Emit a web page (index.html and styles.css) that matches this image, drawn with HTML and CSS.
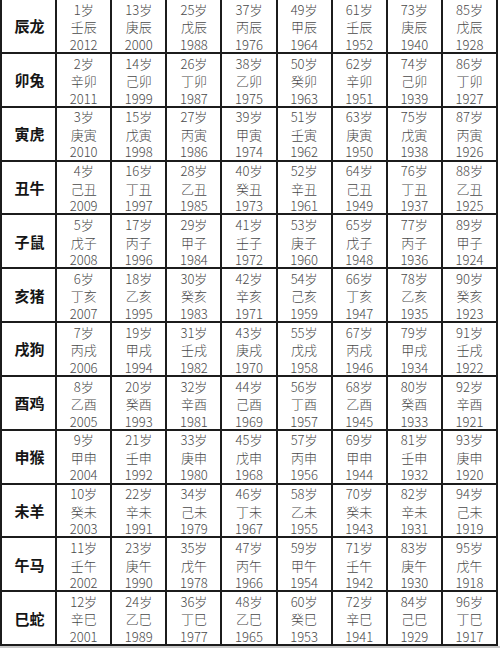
FILE: index.html
```html
<!DOCTYPE html>
<html lang="zh-CN">
<head>
<meta charset="utf-8">
<title>生肖年龄对照表</title>
<link rel="stylesheet" href="styles.css">
</head>
<body>
<div class="table">
  <div class="head">辰龙</div>
  <div class="cell"><span>1岁</span><span>壬辰</span><span>2012</span></div>
  <div class="cell"><span>13岁</span><span>庚辰</span><span>2000</span></div>
  <div class="cell"><span>25岁</span><span>戊辰</span><span>1988</span></div>
  <div class="cell"><span>37岁</span><span>丙辰</span><span>1976</span></div>
  <div class="cell"><span>49岁</span><span>甲辰</span><span>1964</span></div>
  <div class="cell"><span>61岁</span><span>壬辰</span><span>1952</span></div>
  <div class="cell"><span>73岁</span><span>庚辰</span><span>1940</span></div>
  <div class="cell"><span>85岁</span><span>戊辰</span><span>1928</span></div>

  <div class="head">卯兔</div>
  <div class="cell"><span>2岁</span><span>辛卯</span><span>2011</span></div>
  <div class="cell"><span>14岁</span><span>己卯</span><span>1999</span></div>
  <div class="cell"><span>26岁</span><span>丁卯</span><span>1987</span></div>
  <div class="cell"><span>38岁</span><span>乙卯</span><span>1975</span></div>
  <div class="cell"><span>50岁</span><span>癸卯</span><span>1963</span></div>
  <div class="cell"><span>62岁</span><span>辛卯</span><span>1951</span></div>
  <div class="cell"><span>74岁</span><span>己卯</span><span>1939</span></div>
  <div class="cell"><span>86岁</span><span>丁卯</span><span>1927</span></div>

  <div class="head">寅虎</div>
  <div class="cell"><span>3岁</span><span>庚寅</span><span>2010</span></div>
  <div class="cell"><span>15岁</span><span>戊寅</span><span>1998</span></div>
  <div class="cell"><span>27岁</span><span>丙寅</span><span>1986</span></div>
  <div class="cell"><span>39岁</span><span>甲寅</span><span>1974</span></div>
  <div class="cell"><span>51岁</span><span>壬寅</span><span>1962</span></div>
  <div class="cell"><span>63岁</span><span>庚寅</span><span>1950</span></div>
  <div class="cell"><span>75岁</span><span>戊寅</span><span>1938</span></div>
  <div class="cell"><span>87岁</span><span>丙寅</span><span>1926</span></div>

  <div class="head">丑牛</div>
  <div class="cell"><span>4岁</span><span>己丑</span><span>2009</span></div>
  <div class="cell"><span>16岁</span><span>丁丑</span><span>1997</span></div>
  <div class="cell"><span>28岁</span><span>乙丑</span><span>1985</span></div>
  <div class="cell"><span>40岁</span><span>癸丑</span><span>1973</span></div>
  <div class="cell"><span>52岁</span><span>辛丑</span><span>1961</span></div>
  <div class="cell"><span>64岁</span><span>己丑</span><span>1949</span></div>
  <div class="cell"><span>76岁</span><span>丁丑</span><span>1937</span></div>
  <div class="cell"><span>88岁</span><span>乙丑</span><span>1925</span></div>

  <div class="head">子鼠</div>
  <div class="cell"><span>5岁</span><span>戊子</span><span>2008</span></div>
  <div class="cell"><span>17岁</span><span>丙子</span><span>1996</span></div>
  <div class="cell"><span>29岁</span><span>甲子</span><span>1984</span></div>
  <div class="cell"><span>41岁</span><span>壬子</span><span>1972</span></div>
  <div class="cell"><span>53岁</span><span>庚子</span><span>1960</span></div>
  <div class="cell"><span>65岁</span><span>戊子</span><span>1948</span></div>
  <div class="cell"><span>77岁</span><span>丙子</span><span>1936</span></div>
  <div class="cell"><span>89岁</span><span>甲子</span><span>1924</span></div>

  <div class="head">亥猪</div>
  <div class="cell"><span>6岁</span><span>丁亥</span><span>2007</span></div>
  <div class="cell"><span>18岁</span><span>乙亥</span><span>1995</span></div>
  <div class="cell"><span>30岁</span><span>癸亥</span><span>1983</span></div>
  <div class="cell"><span>42岁</span><span>辛亥</span><span>1971</span></div>
  <div class="cell"><span>54岁</span><span>己亥</span><span>1959</span></div>
  <div class="cell"><span>66岁</span><span>丁亥</span><span>1947</span></div>
  <div class="cell"><span>78岁</span><span>乙亥</span><span>1935</span></div>
  <div class="cell"><span>90岁</span><span>癸亥</span><span>1923</span></div>

  <div class="head">戌狗</div>
  <div class="cell"><span>7岁</span><span>丙戌</span><span>2006</span></div>
  <div class="cell"><span>19岁</span><span>甲戌</span><span>1994</span></div>
  <div class="cell"><span>31岁</span><span>壬戌</span><span>1982</span></div>
  <div class="cell"><span>43岁</span><span>庚戌</span><span>1970</span></div>
  <div class="cell"><span>55岁</span><span>戊戌</span><span>1958</span></div>
  <div class="cell"><span>67岁</span><span>丙戌</span><span>1946</span></div>
  <div class="cell"><span>79岁</span><span>甲戌</span><span>1934</span></div>
  <div class="cell"><span>91岁</span><span>壬戌</span><span>1922</span></div>

  <div class="head">酉鸡</div>
  <div class="cell"><span>8岁</span><span>乙酉</span><span>2005</span></div>
  <div class="cell"><span>20岁</span><span>癸酉</span><span>1993</span></div>
  <div class="cell"><span>32岁</span><span>辛酉</span><span>1981</span></div>
  <div class="cell"><span>44岁</span><span>己酉</span><span>1969</span></div>
  <div class="cell"><span>56岁</span><span>丁酉</span><span>1957</span></div>
  <div class="cell"><span>68岁</span><span>乙酉</span><span>1945</span></div>
  <div class="cell"><span>80岁</span><span>癸酉</span><span>1933</span></div>
  <div class="cell"><span>92岁</span><span>辛酉</span><span>1921</span></div>

  <div class="head">申猴</div>
  <div class="cell"><span>9岁</span><span>甲申</span><span>2004</span></div>
  <div class="cell"><span>21岁</span><span>壬申</span><span>1992</span></div>
  <div class="cell"><span>33岁</span><span>庚申</span><span>1980</span></div>
  <div class="cell"><span>45岁</span><span>戊申</span><span>1968</span></div>
  <div class="cell"><span>57岁</span><span>丙申</span><span>1956</span></div>
  <div class="cell"><span>69岁</span><span>甲申</span><span>1944</span></div>
  <div class="cell"><span>81岁</span><span>壬申</span><span>1932</span></div>
  <div class="cell"><span>93岁</span><span>庚申</span><span>1920</span></div>

  <div class="head">未羊</div>
  <div class="cell"><span>10岁</span><span>癸未</span><span>2003</span></div>
  <div class="cell"><span>22岁</span><span>辛未</span><span>1991</span></div>
  <div class="cell"><span>34岁</span><span>己未</span><span>1979</span></div>
  <div class="cell"><span>46岁</span><span>丁未</span><span>1967</span></div>
  <div class="cell"><span>58岁</span><span>乙未</span><span>1955</span></div>
  <div class="cell"><span>70岁</span><span>癸未</span><span>1943</span></div>
  <div class="cell"><span>82岁</span><span>辛未</span><span>1931</span></div>
  <div class="cell"><span>94岁</span><span>己未</span><span>1919</span></div>

  <div class="head">午马</div>
  <div class="cell"><span>11岁</span><span>壬午</span><span>2002</span></div>
  <div class="cell"><span>23岁</span><span>庚午</span><span>1990</span></div>
  <div class="cell"><span>35岁</span><span>戊午</span><span>1978</span></div>
  <div class="cell"><span>47岁</span><span>丙午</span><span>1966</span></div>
  <div class="cell"><span>59岁</span><span>甲午</span><span>1954</span></div>
  <div class="cell"><span>71岁</span><span>壬午</span><span>1942</span></div>
  <div class="cell"><span>83岁</span><span>庚午</span><span>1930</span></div>
  <div class="cell"><span>95岁</span><span>戊午</span><span>1918</span></div>

  <div class="head">巳蛇</div>
  <div class="cell"><span>12岁</span><span>辛巳</span><span>2001</span></div>
  <div class="cell"><span>24岁</span><span>乙巳</span><span>1989</span></div>
  <div class="cell"><span>36岁</span><span>丁巳</span><span>1977</span></div>
  <div class="cell"><span>48岁</span><span>乙巳</span><span>1965</span></div>
  <div class="cell"><span>60岁</span><span>癸巳</span><span>1953</span></div>
  <div class="cell"><span>72岁</span><span>辛巳</span><span>1941</span></div>
  <div class="cell"><span>84岁</span><span>己巳</span><span>1929</span></div>
  <div class="cell"><span>96岁</span><span>丁巳</span><span>1917</span></div>
</div>
<div class="shade"></div>
</body>
</html>
```

FILE: styles.css
```css
html, body {
  margin: 0;
  padding: 0;
  background: #ffffff;
}

body {
  width: 500px;
  height: 648px;
  overflow: hidden;
  font-family: "Noto Sans CJK SC", "Noto Sans", sans-serif;
}

.table {
  display: grid;
  box-sizing: border-box;
  width: 498px;
  grid-template-columns: repeat(9, 1fr);
  grid-auto-rows: 53.85px;
  border-left: 2px solid #1c1c1c;
}

.head,
.cell {
  box-sizing: border-box;
  border-right: 2px solid #1c1c1c;
  border-bottom: 2px solid #1c1c1c;
  display: flex;
  flex-direction: column;
  align-items: center;
  justify-content: center;
}

.head {
  font-size: 15px;
  font-weight: 700;
  color: #151515;
  padding-left: 2px;
}

.cell {
  font-size: 13px;
  font-weight: 300;
  color: #4a4a4a;
  padding-top: 2px;
}

.cell span {
  display: block;
  height: 17.5px;
  line-height: 17.5px;
}

.shade {
  height: 2px;
  background: #c8c8c8;
}
```
